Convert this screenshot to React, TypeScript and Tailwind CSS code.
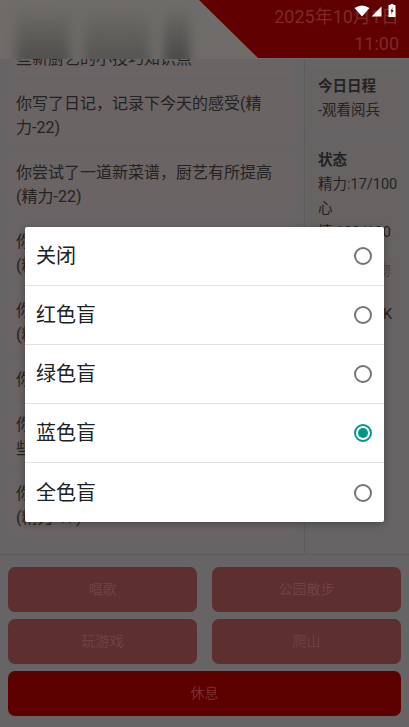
const logs = [
  '你写了日记，记录下今天的感受(精力-22)',
  '你尝试了一道新菜谱，厨艺有所提高(精力-22)',
  '你尝试了一道新菜谱，厨艺有所提高(精力-22)',
  '你尝试了一道新菜谱，厨艺有所提高(精力-22)',
  '你看了一会书',
  '你去商场买了新衣服，心情变得好了一些(精力-22)',
  '你尝试了一道新菜谱，厨艺有所提高(精力-17)',
]

const options = ['关闭', '红色盲', '绿色盲', '蓝色盲', '全色盲']

const fontStack = { fontFamily: 'Roboto, "Noto Sans CJK SC", sans-serif' }

const Radio = ({ checked }: { checked: boolean }) => {
  if (checked) {
    return (
      <div className="flex h-[18px] w-[18px] items-center justify-center rounded-full border-2 border-[#009688]">
        <div className="h-[10px] w-[10px] rounded-full bg-[#009688]" />
      </div>
    )
  }
  return <div className="h-[18px] w-[18px] rounded-full border-2 border-[#757575]" />
}

const StatusIcons = () => (
  <div className="absolute right-[13px] top-[4px] flex items-start">
    <svg width="16" height="12" viewBox="0 0 16 12" className="mt-[1px]">
      <path d="M0.5 3 Q8 -2 15.5 3 L8 11.5 Z" fill="#fff" />
    </svg>
    <svg width="11" height="11" viewBox="0 0 11 11" className="ml-[1px] mt-[2px]">
      <path d="M10.5 0.5 V10.5 H0.5 Z" fill="#fff" />
    </svg>
    <svg width="8" height="13" viewBox="0 0 8 13" className="ml-[6px]">
      <path
        fillRule="evenodd"
        d="M2.5 0 H5.5 V1 H7.5 V13 H0.5 V1 H2.5 Z M4.6 3 L2.4 7.4 H3.7 L3.2 10.6 L5.6 6 H4.2 Z"
        fill="#fff"
      />
    </svg>
  </div>
)

export default function App() {
  return (
    <div className="relative flex h-[727px] w-[409px] flex-col overflow-hidden bg-[#666464]" style={fontStack}>
      {/* Main area */}
      <div className="flex h-[555px] border-b border-[#5d5b5b] pt-[14px]">
        <div className="flex w-[305px] shrink-0 flex-col gap-[7px] overflow-hidden border-r border-[#5d5b5b] px-[8px]">
          <div className="h-[62px] shrink-0 rounded-[3px] bg-[#6a6464] px-[8px] pb-[5px] pt-[9px] text-[16px] leading-[24px] text-[#242222]">
            <div className="h-[24px]" />
            <div className="whitespace-nowrap">些新厨艺的小技巧知识点</div>
          </div>
          {logs.map((log, i) => (
            <div
              key={i}
              className="shrink-0 rounded-[3px] bg-[#6a6464] px-[8px] pb-[5px] pt-[9px] text-[16px] leading-[24px] text-[#242222]"
            >
              {log}
            </div>
          ))}
        </div>

        <div className="flex min-w-0 flex-1 flex-col pl-[5px] pr-[6px] pt-[54px]">
          <div className="h-[62px] rounded-[3px] bg-[#676363] px-[8px] pt-[7px] text-[14.5px] leading-[24px] text-[#242222]">
            <div className="font-bold">今日日程</div>
            <div>-观看阅兵</div>
          </div>
          <div className="mt-[12px] h-[105px] overflow-hidden rounded-[3px] bg-[#676363] px-[8px] pt-[7px] text-[14.5px] leading-[24px] text-[#242222]">
            <div className="font-bold">状态</div>
            <div className="whitespace-nowrap">精力:17/100</div>
            <div>心</div>
            <div>情:100/100</div>
          </div>
          <div className="mt-[7px] rounded-[3px] bg-[#676363] px-[8px] pt-[6px] text-[14.5px] leading-[22px] text-[#242222]">
            <div className="whitespace-nowrap text-[#4a4747]">当前拥有物</div>
            <div className="h-[22px]" />
            <div className="whitespace-nowrap">存款:1000K</div>
          </div>
        </div>
      </div>

      {/* Blurred header */}
      <div className="absolute left-0 top-0 h-[59px] w-full overflow-hidden bg-[#6f6c69]">
        <div className="absolute left-[16px] top-[6px] h-[60px] w-[54px] bg-gradient-to-b from-[#6f6c69] to-[#4d4b49] blur-[6px]" />
        <div className="absolute left-[84px] top-[6px] h-[60px] w-[66px] bg-gradient-to-b from-[#6f6c69] to-[#53514f] blur-[6px]" />
        <div className="absolute left-[164px] top-[6px] h-[60px] w-[26px] bg-gradient-to-b from-[#6f6c69] to-[#474644] blur-[5px]" />
      </div>
      <div className="absolute left-0 top-0 h-[58px] w-full bg-[#610000] [clip-path:polygon(199px_0,100%_0,100%_100%,258px_100%)]" />
      <div className="absolute right-[10px] top-[3px] text-right text-[18px] leading-[27px] text-[#7d2a2a]">
        <div>2025年10月1日</div>
        <div>11:00</div>
      </div>
      <StatusIcons />

      {/* Action buttons */}
      <div className="flex flex-1 flex-col gap-[7px] px-[8px] pt-[12px]">
        <div className="grid grid-cols-2 gap-x-[15px] gap-y-[7px]">
          {['唱歌', '公园散步', '玩游戏', '爬山'].map(label => (
            <div
              key={label}
              className="flex h-[45px] items-center justify-center rounded-[7px] bg-[#5d2f2f] text-[14px] text-[#6f4343]"
            >
              {label}
            </div>
          ))}
        </div>
        <div className="flex h-[45px] items-center justify-center rounded-[7px] bg-[#5c0000] text-[14px] text-[#7a3030]">
          休息
        </div>
      </div>

      {/* Colour blindness dialog */}
      <div className="absolute left-[25px] top-[227px] w-[359px] rounded-[2px] bg-white shadow-[0_2px_8px_rgba(0,0,0,0.3)]">
        {options.map((option, i) => (
          <div
            key={option}
            className={
              i < options.length - 1
                ? 'flex h-[59px] items-center justify-between border-b border-[#e3e3e3] pl-[11px] pr-[12px]'
                : 'flex h-[59px] items-center justify-between pl-[11px] pr-[12px]'
            }
          >
            <span className="text-[20px] text-[#212121]">{option}</span>
            <Radio checked={i === 3} />
          </div>
        ))}
      </div>
    </div>
  )
}
